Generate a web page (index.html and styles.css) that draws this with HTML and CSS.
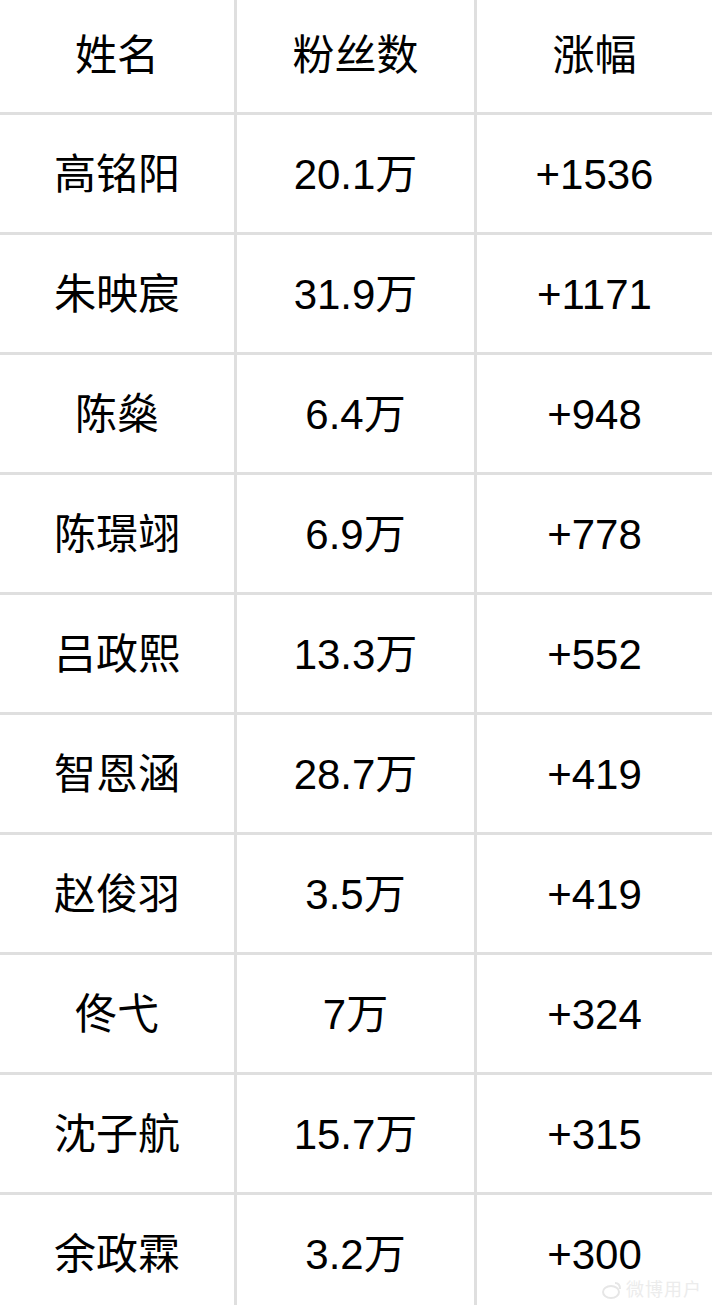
FILE: index.html
```html
<!DOCTYPE html>
<html lang="zh">
<head>
<meta charset="utf-8">
<title>粉丝数</title>
<link rel="stylesheet" href="styles.css">
</head>
<body>
<div class="table">
  <div class="cell head">姓名</div><div class="cell head">粉丝数</div><div class="cell head">涨幅</div>
  <div class="cell">高铭阳</div><div class="cell">20.1万</div><div class="cell">+1536</div>
  <div class="cell">朱映宸</div><div class="cell">31.9万</div><div class="cell">+1171</div>
  <div class="cell">陈燊</div><div class="cell">6.4万</div><div class="cell">+948</div>
  <div class="cell">陈璟翊</div><div class="cell">6.9万</div><div class="cell">+778</div>
  <div class="cell">吕政熙</div><div class="cell">13.3万</div><div class="cell">+552</div>
  <div class="cell">智恩涵</div><div class="cell">28.7万</div><div class="cell">+419</div>
  <div class="cell">赵俊羽</div><div class="cell">3.5万</div><div class="cell">+419</div>
  <div class="cell">佟弋</div><div class="cell">7万</div><div class="cell">+324</div>
  <div class="cell">沈子航</div><div class="cell">15.7万</div><div class="cell">+315</div>
  <div class="cell">余政霖</div><div class="cell">3.2万</div><div class="cell last">+300<span class="mark"><svg class="logo" width="20" height="18" viewBox="0 0 20 18"><ellipse cx="9" cy="11" rx="8" ry="6" fill="none" stroke="#e6e6e6" stroke-width="2"/><path d="M13 2 Q18 2 18 8" fill="none" stroke="#e6e6e6" stroke-width="2"/></svg>微博用户</span></div>
</div>
</body>
</html>
```
FILE: styles.css
```css
html, body {
  margin: 0;
  padding: 0;
  background: #fff;
}
body {
  width: 712px;
  height: 1305px;
  overflow: hidden;
}
.table {
  display: grid;
  grid-template-columns: 234px 237px 235px;
  grid-template-rows: 112px repeat(10, 117px);
  gap: 3px;
  background: #dfdfdf;
  width: 712px;
  font-family: "Liberation Sans", "Noto Sans CJK SC", sans-serif;
  font-size: 42px;
  color: #000;
}
.cell {
  background: #fff;
  display: flex;
  align-items: center;
  justify-content: center;
  line-height: 1;
  padding-top: 3px;
}
.head {
  padding-top: 0;
}
.last {
  position: relative;
}
.mark {
  position: absolute;
  right: 10px;
  bottom: 13px;
  display: flex;
  align-items: center;
  gap: 4px;
  font-size: 18px;
  line-height: 1;
  color: #ececec;
  letter-spacing: 1px;
}
.logo {
  display: block;
}
```
